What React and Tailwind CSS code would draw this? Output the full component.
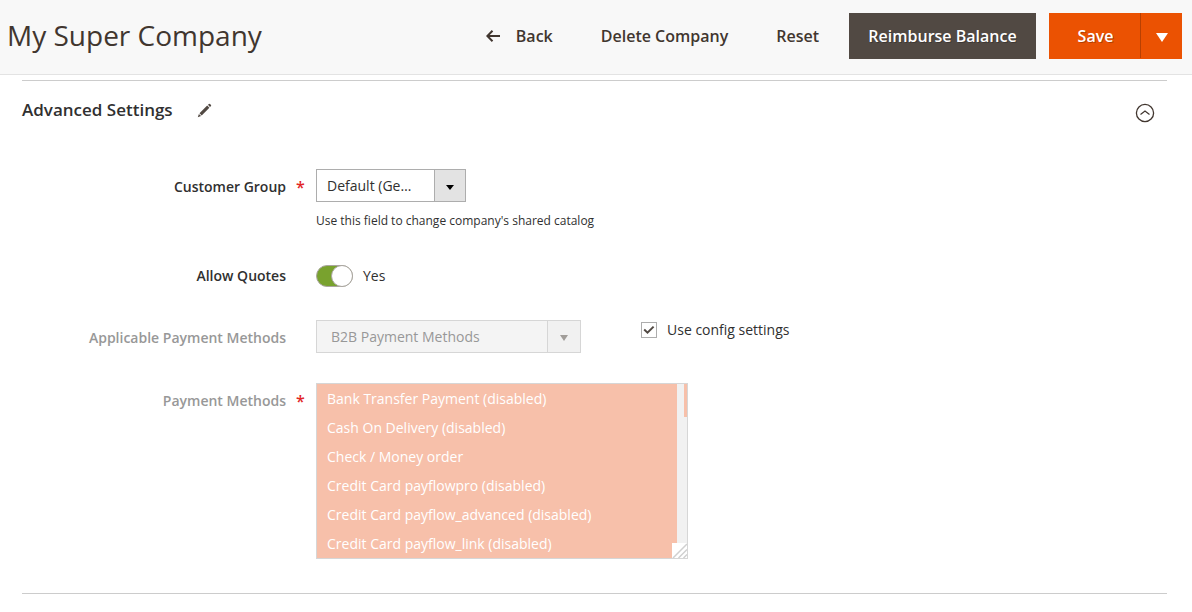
import React, { useState } from "react";

const methods = [
  "Bank Transfer Payment (disabled)",
  "Cash On Delivery (disabled)",
  "Check / Money order",
  "Credit Card payflowpro (disabled)",
  "Credit Card payflow_advanced (disabled)",
  "Credit Card payflow_link (disabled)",
];

const labelClass = "w-66 shrink-0 text-right text-sm/5 font-semibold";

function Required() {
  return (
    <span aria-hidden="true" className="absolute left-full top-2 ml-2.5 text-base/5 font-semibold text-[#e22626]">
      *
    </span>
  );
}

function Header() {
  return (
    <header className="flex items-center justify-between border-b border-[#e3e3e3] bg-[#f8f8f8] pb-[15px] pl-[7px] pr-2.5 pt-[13px] text-[#41362f]">
      <h1 className="pb-0.5 text-[28px]/9">My Super Company</h1>
      <div className="flex items-center text-base/6 font-semibold">
        <button type="button" className="mr-12 flex h-[46px] items-center gap-4">
          <svg width="14" height="12" viewBox="0 0 14 12" fill="none" stroke="currentColor" strokeWidth="2" aria-hidden="true">
            <path d="M14 6H1.5M6.5 .7 1.3 6l5.200 5.300" />
          </svg>
          Back
        </button>
        <button type="button" className="mr-12">Delete Company</button>
        <button type="button" className="mr-[30px]">Reset</button>
        <button type="button" className="mr-[13px] h-[46px] w-[187px] bg-[#514943] text-white [text-shadow:1px_1px_0_rgba(0,0,0,0.25)]">
          Reimburse Balance
        </button>
        <div className="flex h-[46px] bg-[#eb5202] text-white">
          <button type="button" className="w-[91px] pl-0.5 [text-shadow:1px_1px_0_rgba(0,0,0,0.25)]">Save</button>
          <button type="button" aria-label="More save options" className="mb-px flex w-[42px] items-center justify-center border-l border-[#b84002]">
            <svg width="12" height="9" viewBox="0 0 12 9" fill="currentColor" className="mt-1" aria-hidden="true">
              <path d="M0 0h12L6 9z" />
            </svg>
          </button>
        </div>
      </div>
    </header>
  );
}

export default function App() {
  const [quotes, setQuotes] = useState(true);
  const [config, setConfig] = useState(true);
  return (
    <div className="min-h-screen bg-white font-['Open_Sans',sans-serif] text-[#303030]">
      <Header />
      <main className="pl-[22px] pr-[25px] pt-[5px]">
        <section className="border-y border-[#cccccc] pb-[34px]">
          <div className="flex items-center justify-between pr-3 pt-4">
            <div className="flex items-center gap-6">
              <h2 className="text-[17px]/6 font-semibold">Advanced Settings</h2>
              <button type="button" aria-label="Edit">
                <svg width="15" height="15" viewBox="0 0 15 15" fill="#514943" aria-hidden="true">
                  <path d="M10.900 1.800 12 .9q.5-.4 1 0l1 1q.4.500 0 1l-1 1.100zM10.200 2.600l2.200 2.200-7.700 7.700-2.200-2.200zM1.900 10.900l2.200 2.200-3.300 1.100z" />
                </svg>
              </button>
            </div>
            <button type="button" aria-label="Collapse section" className="pt-1.5">
              <svg width="20" height="20" viewBox="0 0 20 20" fill="none" stroke="#41362f" aria-hidden="true">
                <circle cx="10" cy="10" r="8.600" strokeWidth="1.300" />
                <path d="M5.500 11.500 10 8l4.500 3.500" strokeWidth="1.200" />
              </svg>
            </button>
          </div>

          <form className="pt-[46px]">
            <div className="flex gap-[30px]">
              <label htmlFor="group" className={labelClass + " relative pt-2"}>
                Customer Group
                <Required />
              </label>
              <div>
                <div className="relative w-[150px]">
                  <select id="group" className="block h-[33px] w-full appearance-none truncate border border-[#adadad] bg-white pl-2.5 pr-[50px] text-sm text-[#303030]">
                    <option>Default (General)</option>
                  </select>
                  <span className="pointer-events-none absolute inset-y-0 right-0 flex w-8 items-center justify-center border border-[#adadad] bg-[#e3e3e3] pt-1">
                    <svg width="8" height="5" viewBox="0 0 8 5" fill="#000" aria-hidden="true">
                      <path d="M0 0h8L4 5z" />
                    </svg>
                  </span>
                </div>
                <p className="pt-[11px] text-xs/4">Use this field to change company's shared catalog</p>
              </div>
            </div>

            <div className="flex items-center gap-[30px] pt-9">
              <label htmlFor="quotes" className={labelClass}>Allow Quotes</label>
              <div className="flex items-center gap-2.5 text-sm/5">
                <input
                  id="quotes"
                  type="checkbox"
                  role="switch"
                  checked={quotes}
                  onChange={(e) => setQuotes(e.target.checked)}
                  className="h-[22px] w-[37px] appearance-none rounded-full border border-[#aaa6a0] bg-[#e3e3e3] before:block before:size-[22px] before:-ml-px before:-mt-px before:rounded-full before:border before:border-[#aaa6a0] before:bg-white checked:bg-[#79a22e] checked:before:ml-3.5"
                />
                <span>{quotes ? "Yes" : "No"}</span>
              </div>
            </div>

            <div className="flex gap-[30px] pt-[33px]">
              <label htmlFor="applicable" className={labelClass + " pt-2 text-[#989898]"}>
                Applicable Payment Methods
              </label>
              <div className="flex gap-15">
                <div className="relative w-[265px]">
                  <select id="applicable" disabled className="block h-[33px] w-full appearance-none border border-[#d6d6d6] bg-[#f4f4f4] pl-3.5 pr-10 text-sm text-[#989898] opacity-100">
                    <option>B2B Payment Methods</option>
                  </select>
                  <span className="pointer-events-none absolute inset-y-0 right-0 flex w-[34px] items-center justify-center border border-[#d6d6d6] bg-[#f1f1f1] pt-0.5">
                    <svg width="8" height="6" viewBox="0 0 8 6" fill="#a19d99" aria-hidden="true">
                      <path d="M0 0h8L4 6z" />
                    </svg>
                  </span>
                </div>
                <label className="flex h-5 items-center gap-2.5 text-sm/5">
                  <span className="relative block size-4">
                    <input
                      type="checkbox"
                      checked={config}
                      onChange={(e) => setConfig(e.target.checked)}
                      className="peer block size-4 appearance-none border border-[#adadad] bg-white"
                    />
                    <svg width="16" height="16" viewBox="0 0 16 16" fill="none" stroke="#514943" strokeWidth="2" className="pointer-events-none absolute inset-0 hidden peer-checked:block" aria-hidden="true">
                      <path d="M3.200 7.600 6.500 10.700 12.600 4.600" />
                    </svg>
                  </span>
                  Use config settings
                </label>
              </div>
            </div>

            <div className="flex gap-[30px] pt-[30px]">
              <label htmlFor="methods" className={labelClass + " relative pt-2 text-[#989898]"}>
                Payment Methods
                <Required />
              </label>
              <div className="relative flex h-44 w-[372px] border border-[#d6d6d6] bg-[#f1f1f1]">
                <select id="methods" multiple disabled size={6} className="block h-full w-[360px] appearance-none overflow-hidden bg-[#f7c0aa] text-sm text-white opacity-100">
                  {methods.map((m) => (
                    <option key={m} className="h-[29px] px-2.5 py-[5px] text-sm/5 text-white">{m}</option>
                  ))}
                </select>
                <span className="ml-auto h-[33px] w-[3px] bg-[#f7c0aa]" />
                <svg width="15" height="15" viewBox="0 0 15 15" className="absolute bottom-0 right-0" aria-hidden="true">
                  <path fill="#fff" d="M0 0h15v15H0z" />
                  <path d="M1 15 15 1M6.500 15 15 6.500M11.500 15l3.500-3.500" stroke="#d0d0d0" strokeWidth="1.500" />
                </svg>
              </div>
            </div>
          </form>
        </section>
      </main>
    </div>
  );
}
